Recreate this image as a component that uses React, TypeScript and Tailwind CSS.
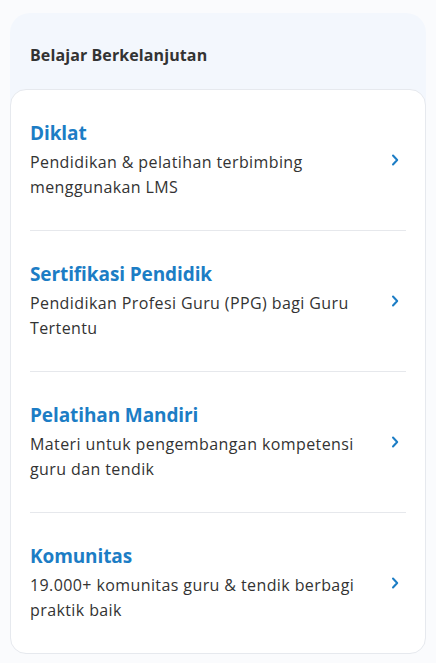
import React from "react";

const items = [
  { title: "Diklat", desc: "Pendidikan & pelatihan terbimbing menggunakan LMS" },
  { title: "Sertifikasi Pendidik", desc: "Pendidikan Profesi Guru (PPG) bagi Guru Tertentu" },
  { title: "Pelatihan Mandiri", desc: "Materi untuk pengembangan kompetensi guru dan tendik" },
  { title: "Komunitas", desc: "19.000+ komunitas guru & tendik berbagi praktik baik" },
];

function Chevron() {
  return (
    <svg width="16" height="16" viewBox="0 0 16 16" fill="none" className="mr-[3px] shrink-0">
      <path d="M6 3.5 L10.2 8 L6 12.5" stroke="#1c7dc5" strokeWidth="2" strokeLinecap="round" strokeLinejoin="round" />
    </svg>
  );
}

export default function App() {
  return (
    <div
      className="min-h-[663px] w-[436px] bg-[#fafbfd] px-[10px] pt-[13px]"
      style={{ fontFamily: '"Open Sans", "Noto Sans", sans-serif' }}
    >
      <div className="rounded-[20px] bg-[#f3f7fd]">
        <div className="px-[20px] pt-[31px] pb-[23px]">
          <h2 className="text-[16px] font-bold leading-[22px] tracking-[0.1px] text-[#333333]">Belajar Berkelanjutan</h2>
        </div>
        <div className="rounded-[16px] border border-[#e6e9ee] bg-white px-[19px]">
          {items.map((it, i) => (
            <div key={it.title} className={i > 0 ? "border-t border-[#e6e8ec]" : ""}>
              <div className="flex items-center gap-3 py-[30px]">
                <div className="flex-1">
                  <div className="text-[19px] font-bold leading-[26px] tracking-[-0.1px] text-[#1c7dc5]">{it.title}</div>
                  <div className="mt-[4px] pr-[6px] text-[16px] leading-[25px] tracking-[0.4px] text-[#333333]">{it.desc}</div>
                </div>
                <Chevron />
              </div>
            </div>
          ))}
        </div>
      </div>
    </div>
  );
}
